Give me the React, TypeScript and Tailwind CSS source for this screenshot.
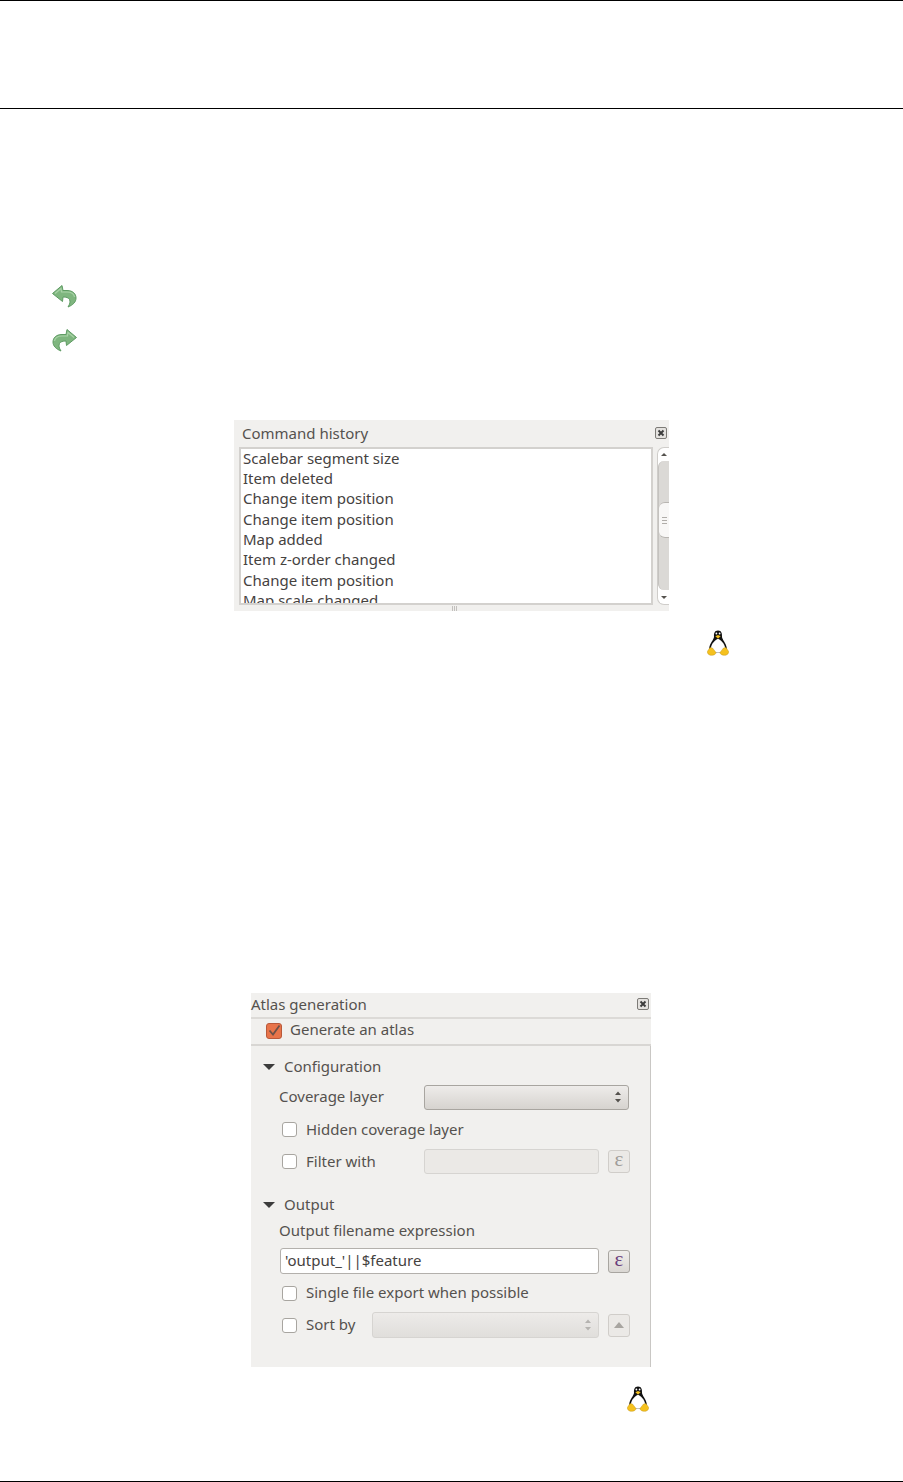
import React from "react";

const font = "font-['Noto_Sans',sans-serif]";

const Arrow = ({ flip }: { flip?: boolean }) => (
	<svg width="26" height="24" viewBox="0 0 26 24" className={flip ? "-scale-x-100" : ""}>
		<path
			d="M1.5 9.5 L11 1.5 L12 6.5 L16 6.5 C22 6.5 25 10 25 14 C25 18 22 21 17 23 C19 20 19.5 17.5 18.5 15.5 C17.5 13.5 15 13 12 13 L11.5 17.5 Z"
			fill="#7fb67f"
			stroke="#5e9b63"
			strokeWidth="1"
			strokeLinejoin="round"
		/>
		<path d="M4 9.5 L10 4.5 L10.5 8 L16 8 C20 8 23 10 23.5 13" fill="none" stroke="#a9d3a7" strokeWidth="1.2" />
	</svg>
);

const Penguin = () => (
	<svg width="22" height="26" viewBox="0 0 22 26">
		<path d="M11 0.5 C7.500 0.500 6.800 3.500 7 6.500 C7.100 9.500 2.800 13 2.200 18 C2 20.500 4 22.500 7 22.500 L15 22.500 C18 22.500 20 20.500 19.800 18 C19.200 13 14.900 9.500 15 6.500 C15.200 3.500 14.500 0.500 11 0.500 Z" fill="#111" />
		<path d="M11 8.800 C8.500 9.800 4 14 4 18 C4 21 7.500 22.500 11 22.500 C14.500 22.500 18 21 18 18 C18 14 13.500 9.800 11 8.800 Z" fill="#fff" />
		<path d="M8.300 6.300 L11 5 L13.700 6.300 L11 8.500 Z" fill="#f5c11e" />
		<circle cx="9.400" cy="3.500" r="0.900" fill="#fff" />
		<circle cx="12.600" cy="3.500" r="0.900" fill="#fff" />
		<path d="M0.300 21.500 L3 17.500 L5.500 18 L9 22.500 C9.200 24.500 5.500 25.800 3.200 25.200 C1.500 24.700 -0.200 23 0.300 21.500 Z" fill="#f5c11e" stroke="#b98d18" strokeWidth="0.400" />
		<path d="M21.700 21.500 L19 17.500 L16.500 18 L13 22.500 C12.800 24.500 16.500 25.800 18.800 25.200 C20.500 24.700 22.200 23 21.700 21.500 Z" fill="#f5c11e" stroke="#b98d18" strokeWidth="0.400" />
	</svg>
);

const CloseBox = () => (
	<svg width="12" height="12" viewBox="0 0 12 12">
		<rect x="0.500" y="0.500" width="11" height="11" rx="1.500" fill="#e4e2df" stroke="#7d7b77" />
		<path d="M3.500 3.500 L8.500 8.500 M8.500 3.500 L3.500 8.500" stroke="#3c3c3c" strokeWidth="1.900" />
	</svg>
);

const Tri = () => (
	<span className="w-0 h-0 border-x-[6px] border-x-transparent border-t-[6px] border-t-[#3c3c3c]" />
);

const Check = ({ checked }: { checked?: boolean }) =>
	checked ? (
		<span className="w-[16px] h-[16px] rounded-[3px] bg-[#e8744a] border border-[#b9593a] flex items-center justify-center">
			<svg width="14" height="14" viewBox="0 0 14 14">
				<path d="M2.500 6.500 L6 10.500 L12.500 1.500" fill="none" stroke="#6e5148" strokeWidth="1.800" />
			</svg>
		</span>
	) : (
		<span className="w-[15px] h-[15px] rounded-[3px] bg-white border border-[#a8a5a0]" />
	);

const Updown = ({ color }: { color: string }) => (
	<svg width="8" height="16" viewBox="0 0 8 16">
		<path d="M4 2.500 L7 6 L1 6 Z M4 13.500 L7 10 L1 10 Z" fill={color} />
	</svg>
);

const Epsilon = ({ on }: { on?: boolean }) => (
	<span
		className={`w-[22px] h-[23px] rounded-[3px] border flex items-center justify-center text-[21px] leading-none pb-[3px] font-['Liberation_Serif',serif] ${
			on
				? "border-[#a8a5a0] bg-gradient-to-b from-[#f0eeeb] to-[#dad7d3] text-[#6a3f7c]"
				: "border-[#d0cdc9] bg-[#ebe9e6] text-[#a09d99]"
		}`}
	>
		ε
	</span>
);

const historyRows = [
	"Scalebar segment size",
	"Item deleted",
	"Change item position",
	"Change item position",
	"Map added",
	"Item z-order changed",
	"Change item position",
	"Map scale changed",
];

function CommandHistory() {
	return (
		<div className="ml-[234px] w-[435px] h-[191px] bg-[#f1f0ee] flex flex-col overflow-hidden">
			<div className="h-[27px] shrink-0 flex items-center justify-between pl-[8px] pr-[2px] pb-px text-[15px] text-[#55524e]">
				<span>Command history</span>
				<CloseBox />
			</div>
			<div className="flex h-[158px] pl-[5px]">
				<div className="w-[414px] border-2 border-[#d3d1ce] bg-white overflow-hidden pl-[2px] text-[15px] text-[#45423f]">
					<div className="mt-[-1.500px]">
						{historyRows.map((row, i) => (
							<div key={i} className="h-[20.400px] leading-[20.400px] whitespace-nowrap">
								{row}
							</div>
						))}
					</div>
				</div>
				<div className="ml-[4px] w-[12px] h-[158px] rounded-l-[7px] border border-[#cfcdca] border-r-0 bg-white flex flex-col items-center overflow-hidden">
					<div className="h-[13px] shrink-0 flex items-center justify-center">
						<span className="w-0 h-0 border-x-[3px] border-x-transparent border-b-[3px] border-b-[#55524e]" />
					</div>
					<div className="w-full flex-1 bg-[#dbd9d6] rounded-l-[6px] border-l border-[#c4c2bf] flex flex-col">
						<div className="h-[41px]" />
						<div className="h-[36px] bg-[#f8f7f6] border-y border-[#b8b5b1] rounded-l-[6px] flex flex-col items-center justify-center gap-[2px]">
							<span className="w-[5px] h-px bg-[#b0ada9]" />
							<span className="w-[5px] h-px bg-[#b0ada9]" />
							<span className="w-[5px] h-px bg-[#b0ada9]" />
						</div>
					</div>
					<div className="h-[14px] shrink-0 flex items-center justify-center">
						<span className="w-0 h-0 border-x-[3px] border-x-transparent border-t-[3px] border-t-[#55524e]" />
					</div>
				</div>
			</div>
			<div className="flex-1 flex justify-center items-center gap-px pl-[5px]">
				<span className="w-px h-[5px] bg-[#c2c0bd]" />
				<span className="w-px h-[5px] bg-[#c2c0bd]" />
				<span className="w-px h-[5px] bg-[#c2c0bd]" />
			</div>
		</div>
	);
}

function AtlasGeneration() {
	return (
		<div className="ml-[251px] w-[400px] h-[374px] bg-[#f1f0ee] flex flex-col text-[15px] text-[#55524e]">
			<div className="h-[26px] shrink-0 flex items-center justify-between pr-[2px] pb-[2px] border-b-2 border-[#dcdad7]">
				<span>Atlas generation</span>
				<CloseBox />
			</div>
			<div className="h-[27px] shrink-0 flex items-center gap-[8px] pl-[15px] pb-px border-b-2 border-[#d8d6d3]">
				<Check checked />
				<span className="pb-[3px]">Generate an atlas</span>
			</div>
			<div className="flex-1 border-r border-[#c9c7c4] flex flex-col">
				<div className="h-[41px] flex items-center gap-[9px] pl-[12px]">
					<Tri />
					<span>Configuration</span>
				</div>
				<div className="flex items-center h-[26px] pl-[28px] mt-[-3px]">
					<span className="w-[145px] pb-[2px]">Coverage layer</span>
					<div className="w-[205px] h-[25px] rounded-[3px] border border-[#a8a5a0] bg-gradient-to-b from-[#eeecea] to-[#d6d3cf] flex items-center justify-end pr-[6px]">
						<Updown color="#55524e" />
					</div>
				</div>
				<div className="flex items-center gap-[9px] h-[24px] pl-[31px] mt-[7px]">
					<Check />
					<span>Hidden coverage layer</span>
				</div>
				<div className="flex items-center h-[26px] pl-[31px] mt-[7px]">
					<Check />
					<span className="ml-[9px] w-[118px]">Filter with</span>
					<div className="w-[175px] h-[25px] rounded-[3px] border border-[#d6d4d1] bg-[#ebe9e6]" />
					<span className="ml-[9px]">
						<Epsilon />
					</span>
				</div>
				<div className="flex items-center gap-[9px] h-[24px] pl-[12px] mt-[19px]">
					<Tri />
					<span className="pb-[2px]">Output</span>
				</div>
				<div className="h-[24px] pl-[28px] mt-[2px] pb-[2px] flex items-center">Output filename expression</div>
				<div className="flex items-center h-[26px] pl-[29px] mt-[5px]">
					<div className="w-[319px] h-[26px] rounded-[3px] border border-[#b3b0ac] bg-white flex items-center pl-[4px] pb-[2px] text-[#45423f]">
						'output_'||$feature
					</div>
					<span className="ml-[9px]">
						<Epsilon on />
					</span>
				</div>
				<div className="flex items-center gap-[9px] h-[24px] pl-[31px] mt-[7px]">
					<Check />
					<span className="pb-[2px]">Single file export when possible</span>
				</div>
				<div className="flex items-center h-[26px] pl-[31px] mt-[7px]">
					<Check />
					<span className="ml-[9px] w-[66px] pb-[2px]">Sort by</span>
					<div className="w-[227px] h-[26px] rounded-[3px] border border-[#d6d4d1] bg-gradient-to-b from-[#edebe9] to-[#e0dedb] flex items-center justify-end pr-[6px]">
						<Updown color="#b5b3b0" />
					</div>
					<span className="ml-[9px] w-[22px] h-[23px] rounded-[3px] border border-[#d0cdc9] bg-[#ebe9e6] flex items-center justify-center">
						<span className="w-0 h-0 border-x-[5px] border-x-transparent border-b-[6px] border-b-[#a8a5a0]" />
					</span>
				</div>
			</div>
		</div>
	);
}

export default function App() {
	return (
		<div className={`w-[903px] h-[1482px] bg-white flex flex-col ${font}`}>
			<div className="h-[109px] shrink-0 border-y border-black" />
			<div className="flex flex-col gap-[20px] pl-[52px] pt-[175px]">
				<span className="ml-[-1px]">
					<Arrow />
				</span>
				<Arrow flip />
			</div>
			<div className="mt-[68px]">
				<CommandHistory />
			</div>
			<div className="ml-[707px] mt-[19px]">
				<Penguin />
			</div>
			<div className="mt-[337px]">
				<AtlasGeneration />
			</div>
			<div className="ml-[627px] mt-[19px]">
				<Penguin />
			</div>
			<div className="mt-[69px] border-t border-black" />
		</div>
	);
}
